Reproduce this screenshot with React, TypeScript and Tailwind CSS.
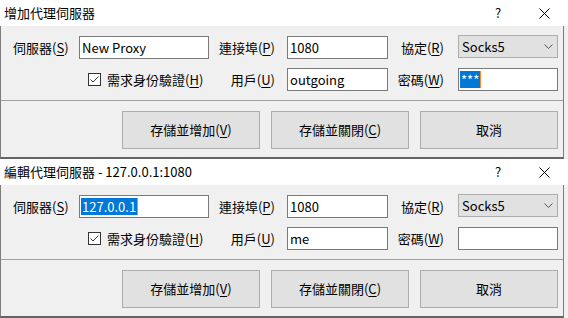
import React from "react";

const F = "font-['Noto_Sans_CJK_TC','Noto_Sans',sans-serif]";

function L({ text, k, right }: { text: string; k: string; right?: boolean }) {
  return (
    <div className={`flex items-center ${right ? "justify-end" : ""} text-[13px] leading-[16px] text-black whitespace-nowrap`}>
      {text}(<u className="underline-offset-[2px]">{k}</u>)
    </div>
  );
}

function Input({ value, selected }: { value: string; selected?: boolean }) {
  return (
    <div className="h-[23px] border border-[#7a7a7a] bg-white flex items-center pl-[1px] text-[13px] leading-[16px] text-black whitespace-nowrap overflow-hidden">
      {selected ? (
        <>
          <span className="bg-[#0078d7] text-white pl-[1px] pr-[1px] h-[17px] flex items-center">{value}</span>
          <span className="w-[1px] h-[17px] bg-[#ff8728]" />
        </>
      ) : (
        <span className="pl-[1px]">{value}</span>
      )}
    </div>
  );
}

function Select({ value }: { value: string }) {
  return (
    <div className="h-[23px] -mt-[1px] border border-[#adadad] bg-[#e1e1e1] flex items-center pl-[3px] pr-[4px] text-[13px] leading-[16px] text-black">
      <span>{value}</span>
      <svg className="ml-auto" width="9" height="6" viewBox="0 0 9 6">
        <polyline points="0.5,0.5 4.5,4.5 8.5,0.5" fill="none" stroke="#555" strokeWidth="1" />
      </svg>
    </div>
  );
}

function Btn({ text, k }: { text: string; k?: string }) {
  return (
    <div className="w-[138px] h-[38px] border border-[#adadad] bg-[#e1e1e1] flex items-center justify-center text-[13px] leading-[16px] text-black">
      {text}
      {k ? (
        <>
          (<u className="underline-offset-[2px]">{k}</u>)
        </>
      ) : null}
    </div>
  );
}

function Dialog({
  title,
  server,
  serverSelected,
  user,
  pw,
  pwSelected,
}: {
  title: string;
  server: string;
  serverSelected?: boolean;
  user: string;
  pw: string;
  pwSelected?: boolean;
}) {
  return (
    <div className="h-[159px] flex flex-col">
      <div className="h-[26px] bg-white flex items-center">
        <span className="pl-[4px] text-[13px] leading-[16px] text-black whitespace-nowrap">{title}</span>
        <div className="ml-auto flex h-full">
          <div className="w-[46px] h-full flex items-center justify-center text-[13px] text-black">?</div>
          <div className="w-[46px] h-full flex items-center justify-center">
            <svg width="11" height="11" viewBox="0 0 11 11">
              <path d="M0.5 0.5 L10.5 10.5 M10.5 0.5 L0.5 10.5" stroke="#000" strokeWidth="1" />
            </svg>
          </div>
          <div className="w-[1px]" />
        </div>
      </div>
      <div className="flex flex-1">
        <div className="w-[564px] flex flex-col bg-[#f0f0f0] border-l border-r border-[#7d7d7d] border-b-2 border-b-[#646464]">
          <div className="grid grid-cols-[66px_130px_78px_101px_70px_100px] grid-rows-[23px_23px] gap-y-[9px] pl-[12px] pt-[10px] pb-[9px]">
            <L text="伺服器" k="S" />
            <Input value={server} selected={serverSelected} />
            <div className="flex justify-end pr-[12px]">
              <L text="連接埠" k="P" right />
            </div>
            <Input value="1080" />
            <div className="flex justify-end pr-[14px]">
              <L text="協定" k="R" right />
            </div>
            <Select value="Socks5" />

            <div />
            <div className="flex items-center pl-[9px] gap-[6px] text-[13px] leading-[16px] text-black whitespace-nowrap">
              <div className="w-[13px] h-[13px] border border-[#333] bg-white flex items-center justify-center">
                <svg width="11" height="11" viewBox="0 0 11 11">
                  <polyline points="1.5,5.5 4,8 9.5,2.5" fill="none" stroke="#333" strokeWidth="1" />
                </svg>
              </div>
              <span>
                需求身份驗證(<u className="underline-offset-[2px]">H</u>)
              </span>
            </div>
            <div className="flex justify-end pr-[12px]">
              <L text="用戶" k="U" right />
            </div>
            <Input value={user} />
            <div className="flex justify-end pr-[14px]">
              <L text="密碼" k="W" right />
            </div>
            <Input value={pw} selected={pwSelected} />
          </div>
          <div className="h-[1px] bg-[#a0a0a0]" />
          <div className="flex justify-end gap-[11px] pt-[10px] pr-[5px]">
            <Btn text="存儲並增加" k="V" />
            <Btn text="存儲並關閉" k="C" />
            <Btn text="取消" />
          </div>
        </div>
        <div className="flex-1 bg-[#f0f0f0]" />
      </div>
    </div>
  );
}

export default function App() {
  return (
    <div className={`w-[568px] h-[318px] overflow-hidden bg-[#f0f0f0] ${F}`}>
      <Dialog title="增加代理伺服器" server="New Proxy" user="outgoing" pw="***" pwSelected />
      <Dialog title="編輯代理伺服器 - 127.0.0.1:1080" server="127.0.0.1" serverSelected user="me" pw="" />
    </div>
  );
}
